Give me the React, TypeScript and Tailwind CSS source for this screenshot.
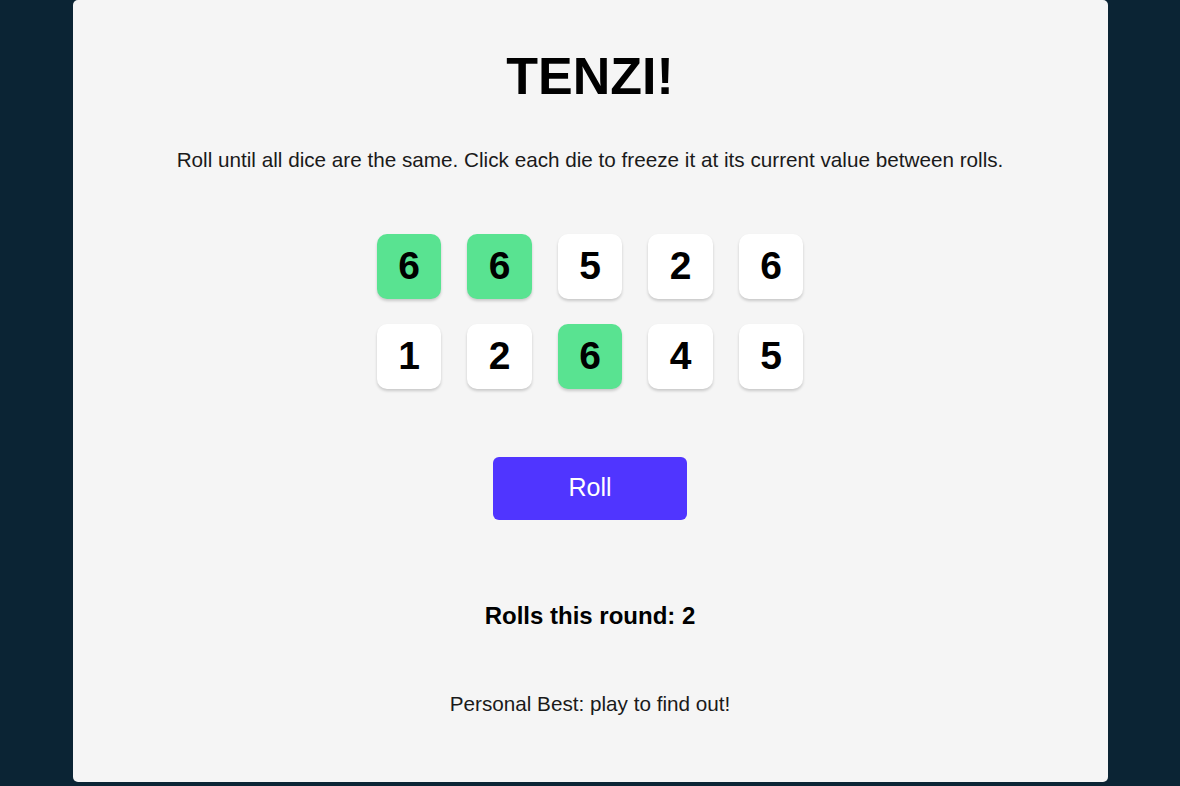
import React, { useState } from "react";

type Die = { value: number; held: boolean };

const initialDice: Die[] = [
  { value: 6, held: true },
  { value: 6, held: true },
  { value: 5, held: false },
  { value: 2, held: false },
  { value: 6, held: false },
  { value: 1, held: false },
  { value: 2, held: false },
  { value: 6, held: true },
  { value: 4, held: false },
  { value: 5, held: false },
];

export default function App() {
  const [dice, setDice] = useState<Die[]>(initialDice);
  const [rolls, setRolls] = useState(2);

  const toggle = (i: number) =>
    setDice((d) => d.map((die, j) => (j === i ? { ...die, held: !die.held } : die)));

  const roll = () => {
    setDice((d) =>
      d.map((die) => (die.held ? die : { ...die, value: Math.ceil(Math.random() * 6) }))
    );
    setRolls((r) => r + 1);
  };

  return (
    <div
      className="w-full h-[786px] bg-[#0B2434] flex justify-center overflow-hidden"
      style={{ fontFamily: '"Liberation Sans", Arial, sans-serif' }}
    >
      <main className="w-[1035px] h-[782px] bg-[#F5F5F5] rounded-[5px] flex flex-col items-center pt-[48px] text-black">
        <h1 className="text-[52px] leading-[56px] font-bold">TENZI!</h1>
        <p className="mt-[42px] text-[20.7px] leading-[28px] text-[#1a1a1a]">
          Roll until all dice are the same. Click each die to freeze it at its current value between rolls.
        </p>
        <div className="mt-[60px] grid grid-cols-5 gap-x-[26px] gap-y-[25.5px]">
          {dice.map((die, i) => (
            <button
              key={i}
              onClick={() => toggle(i)}
              className={`w-[64.5px] h-[64.5px] rounded-[10px] flex items-center justify-center text-[39px] font-bold shadow-[0_2px_3px_rgba(0,0,0,0.18)] ${
                die.held ? "bg-[#59E391]" : "bg-white"
              }`}
            >
              {die.value}
            </button>
          ))}
        </div>
        <button
          onClick={roll}
          className="mt-[68px] w-[194px] h-[63px] rounded-[6px] bg-[#5035FF] text-white text-[25px]"
        >
          Roll
        </button>
        <p className="mt-[82px] text-[24px] leading-[28px] font-bold">Rolls this round: {rolls}</p>
        <p className="mt-[60px] text-[20.7px] leading-[28px] text-[#1a1a1a]">Personal Best: play to find out!</p>
      </main>
    </div>
  );
}
